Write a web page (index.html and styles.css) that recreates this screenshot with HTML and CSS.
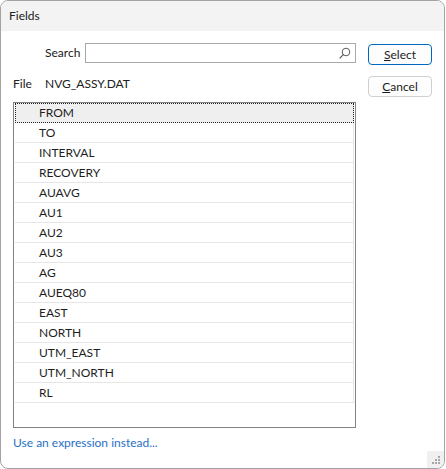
FILE: index.html
```html
<!DOCTYPE html>
<html>
<head>
<meta charset="utf-8">
<link rel="stylesheet" href="styles.css">
</head>
<body>
<div class="dialog">
  <div class="titlebar">Fields</div>
  <div class="body">
    <div class="main">
      <div class="left">
        <div class="search-row">
          <span class="search-label">Search</span>
          <div class="search-input">
            <svg class="search-icon" width="12" height="12" viewBox="0 0 12 12">
              <circle cx="7" cy="5" r="3.8" fill="none" stroke="#5a5a5a" stroke-width="1"/>
              <path d="M4.3 7.7 L1 11" stroke="#5a5a5a" stroke-width="1.1" stroke-linecap="round"/>
            </svg>
          </div>
        </div>
        <div class="file-row">
          <span class="file-label">File</span>
          <span class="file-value">NVG_ASSY.DAT</span>
        </div>
        <div class="list">
          <div class="row focused">FROM</div>
          <div class="row">TO</div>
          <div class="row">INTERVAL</div>
          <div class="row">RECOVERY</div>
          <div class="row">AUAVG</div>
          <div class="row">AU1</div>
          <div class="row">AU2</div>
          <div class="row">AU3</div>
          <div class="row">AG</div>
          <div class="row">AUEQ80</div>
          <div class="row">EAST</div>
          <div class="row">NORTH</div>
          <div class="row">UTM_EAST</div>
          <div class="row">UTM_NORTH</div>
          <div class="row">RL</div>
        </div>
      </div>
      <div class="buttons">
        <button class="btn default"><u>S</u>elect</button>
        <button class="btn"><u>C</u>ancel</button>
      </div>
    </div>
    <div class="footer">
      <a class="link">Use an expression instead...</a>
    </div>
  </div>
  <div class="grip">
    <svg width="16" height="16" viewBox="0 0 16 16">
      <rect x="11" y="5" width="2" height="2" fill="#a8a8a8"/>
      <rect x="8" y="8" width="2" height="2" fill="#a8a8a8"/>
      <rect x="11" y="8" width="2" height="2" fill="#a8a8a8"/>
      <rect x="5" y="11" width="2" height="2" fill="#a8a8a8"/>
      <rect x="8" y="11" width="2" height="2" fill="#a8a8a8"/>
      <rect x="11" y="11" width="2" height="2" fill="#a8a8a8"/>
    </svg>
  </div>
</div>
</body>
</html>
```

FILE: styles.css
```css
* { box-sizing: border-box; }
html, body {
  margin: 0;
  padding: 0;
  background: #ffffff;
}
body {
  font-family: Lato, "Liberation Sans", Arial, sans-serif;
  font-size: 12px;
  color: #202020;
}
.dialog {
  position: relative;
  width: 445px;
  height: 469px;
  border: 1px solid #a3a3a3;
  border-radius: 8px;
  overflow: hidden;
  background: #ffffff;
  display: flex;
  flex-direction: column;
}
.titlebar {
  height: 30px;
  background: #f3f3f3;
  padding-left: 8px;
  line-height: 30px;
  font-size: 12px;
}
.body {
  flex: 1;
  display: flex;
  flex-direction: column;
  padding: 12px 0 0 12px;
}
.main {
  display: flex;
  gap: 12px;
}
.left {
  width: 343px;
  display: flex;
  flex-direction: column;
}
.search-row {
  display: flex;
  align-items: center;
  padding-left: 32px;
  height: 20px;
  line-height: 22px;
}
.search-label {
  width: 40px;
}
.search-input {
  position: relative;
  flex: 1;
  height: 20px;
  border: 1px solid #a9a9a9;
  background: #fff;
}
.search-icon {
  position: absolute;
  right: 4px;
  top: 3px;
}
.file-row {
  display: flex;
  align-items: center;
  height: 20px;
  margin-top: 11px;
  line-height: 22px;
}
.file-label {
  width: 32px;
}
.list {
  margin-top: 8px;
  height: 326px;
  width: 343px;
  border: 1px solid #828282;
  background: #fff;
  padding: 0 1px 0 1px;
}
.row {
  height: 20px;
  border-bottom: 1px solid #e6e6e6;
  border-right: 1px solid #e6e6e6;
  padding-left: 24px;
  line-height: 20px;
  color: #1e1e1e;
}
.row.focused {
  background: #efefef;
  outline: 1px dotted #222;
  outline-offset: -1px;
  border-bottom-color: transparent;
}
.buttons {
  display: flex;
  flex-direction: column;
  gap: 11px;
  padding-top: 1px;
}
.btn {
  width: 64px;
  height: 21px;
  font-family: Lato, "Liberation Sans", Arial, sans-serif;
  font-size: 12px;
  color: #1b1b1b;
  background: #fdfdfd;
  border: 1px solid #d0d0d0;
  border-radius: 4px;
  padding: 0;
  line-height: 20px;
}
.btn.default {
  border: 1px solid #0067c0;
}
.footer {
  margin-top: 7px;
  height: 16px;
}
.link {
  color: #1f6fc5;
  text-decoration: none;
}
.grip {
  position: absolute;
  right: 0;
  bottom: 0;
  width: 17px;
  height: 17px;
  background: #f0f0f0;
}
.grip svg {
  display: block;
}
```
